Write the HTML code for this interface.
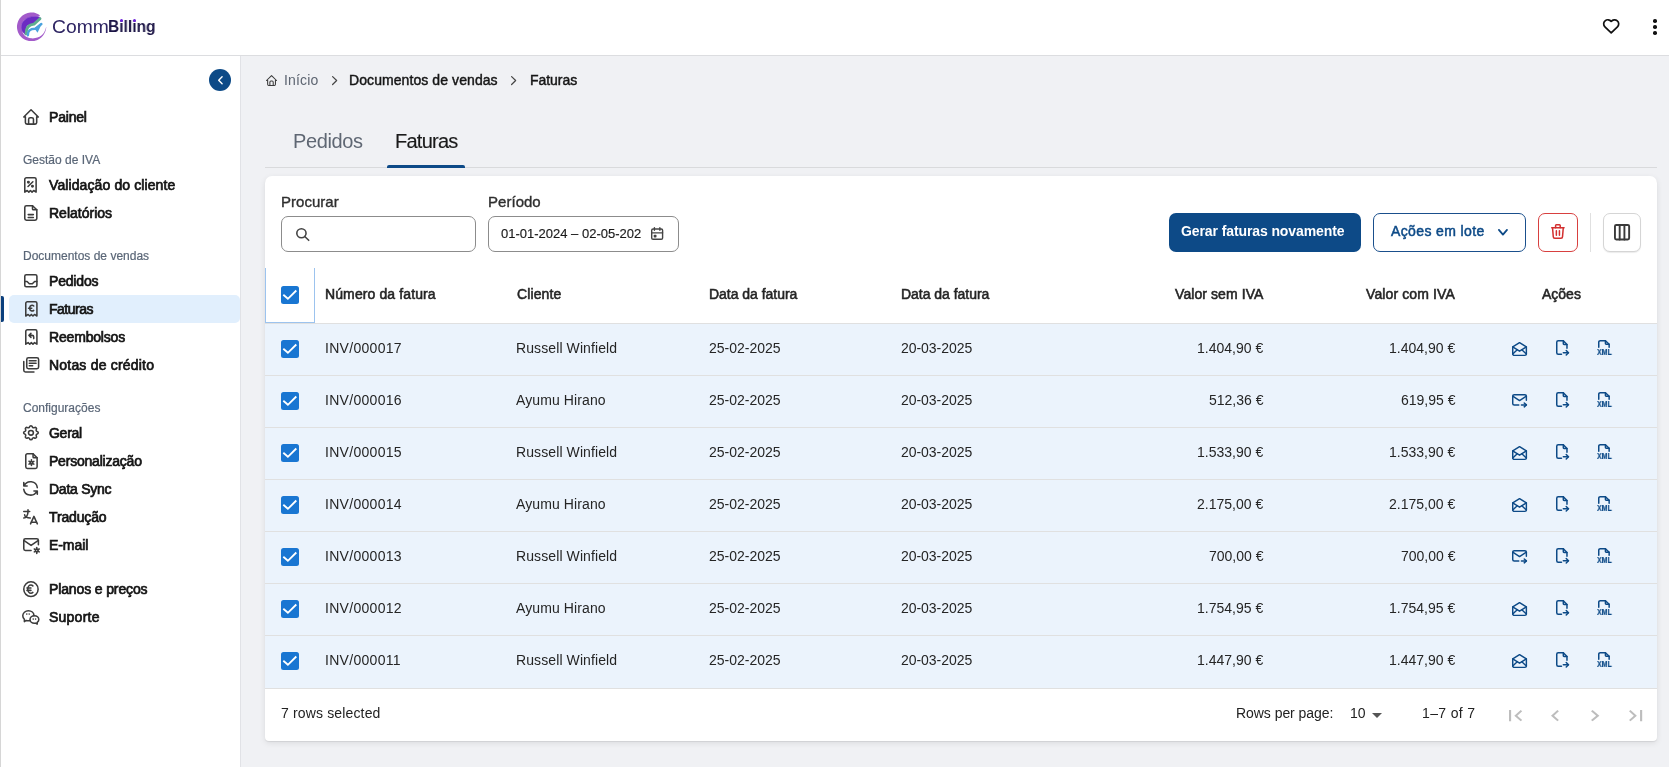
<!DOCTYPE html>
<html><head><meta charset="utf-8"><title>CommBilling - Faturas</title>
<style>
html,body{margin:0;padding:0;width:1669px;height:767px;overflow:hidden;background:#f0f1f4;}
body{position:relative;font-family:"Liberation Sans", sans-serif;-webkit-font-smoothing:antialiased;}
.t{position:absolute;white-space:nowrap;will-change:transform;}
.b{position:absolute;}
.ic{position:absolute;overflow:visible;}
</style></head><body>
<div class="b" style="left:0px;top:0px;width:1669px;height:55px;background:#fff;"></div>
<div class="b" style="left:0px;top:55px;width:1669px;height:1px;background:#dcdde0;"></div>
<div class="b" style="left:0px;top:56px;width:240px;height:711px;background:#fff;"></div>
<div class="b" style="left:240px;top:56px;width:1px;height:711px;background:#e1e2e6;"></div>
<div class="b" style="left:0px;top:0px;width:1px;height:767px;background:#d6d6d6;"></div>
<svg class="ic" style="left:12px;top:8px;width:40px;height:38px" viewBox="0 0 807 767">
<path d="M560,145 C551.7,132.3 497.5,108.8 470,100 C442.5,91.2 425.0,90.0 395,92 C365.0,94.0 324.2,99.0 290,112 C255.8,125.0 217.5,145.3 190,170 C162.5,194.7 140.0,225.0 125,260 C110.0,295.0 100.0,340.0 100,380 C100.0,420.0 110.0,465.0 125,500 C140.0,535.0 162.5,565.0 190,590 C217.5,615.0 255.8,637.0 290,650 C324.2,663.0 360.0,668.0 395,668 C430.0,668.0 467.5,662.2 500,650 C532.5,637.8 565.0,616.7 590,595 C615.0,573.3 634.5,545.8 650,520 C665.5,494.2 676.3,462.5 683,440 C689.7,417.5 692.5,383.3 690,385 C687.5,386.7 678.8,426.7 668,450 C657.2,473.3 643.8,503.3 625,525 C606.2,546.7 580.8,566.2 555,580 C529.2,593.8 497.5,602.7 470,608 C442.5,613.3 416.7,614.7 390,612 C363.3,609.3 333.3,602.7 310,592 C286.7,581.3 267.5,568.0 250,548 C232.5,528.0 215.3,500.0 205,472 C194.7,444.0 187.2,410.3 188,380 C188.8,349.7 196.7,315.3 210,290 C223.3,264.7 245.5,244.7 268,228 C290.5,211.3 317.7,198.7 345,190 C372.3,181.3 402.8,178.3 432,176 C461.2,173.7 498.7,181.2 520,176 C541.3,170.8 568.3,157.7 560,145Z" fill="#a35bca"/>
<path d="M548,186 C525.8,179.3 465.8,177.0 432,178 C398.2,179.0 372.3,183.0 345,192 C317.7,201.0 290.2,215.0 268,232 C245.8,249.0 224.7,269.3 212,294 C199.3,318.7 192.5,350.7 192,380 C191.5,409.3 196.0,444.2 209,470 C222.0,495.8 257.7,526.3 270,535 C282.3,543.7 280.8,541.2 283,522 C285.2,502.8 277.2,449.5 283,420 C288.8,390.5 291.0,361.3 318,345 C345.0,328.7 403.8,343.2 445,322 C486.2,300.8 547.8,240.7 565,218 C582.2,195.3 570.2,192.7 548,186Z" fill="#6c2bc3" stroke="#6c2bc3" stroke-width="14"/>
<path d="M283,522 C280,420 318,338 445,325 L565,218" stroke="#5fae8f" stroke-width="58" fill="none" stroke-linecap="round"/>
<path d="M320,548 C318,465 360,418 470,420 L592,322" stroke="#4aa3de" stroke-width="50" fill="none" stroke-linecap="round"/>
<path d="M450,410 L602,318 L515,498Z" fill="#4aa3de"/>
</svg>
<div class="t" style="left:52.4px;top:17.66px;font-size:18px;line-height:18px;color:#2e2563;transform:scaleX(1.072);transform-origin:0 0;">Comm</div>
<div class="t" style="left:108.4px;top:18.21px;font-size:17px;line-height:17px;font-weight:700;color:#1b1445;transform:scaleX(0.915);transform-origin:0 0;">Billing</div>
<div class="b" style="left:119.7px;top:19.3px;width:3px;height:3px;background:#6a1fd8;border-radius:50%;"></div>
<div class="b" style="left:132.7px;top:19.3px;width:3px;height:3px;background:#6a1fd8;border-radius:50%;"></div>
<svg class="ic" style="left:1602.60px;top:19.20px;width:16.40px;height:14.80px;" viewBox="0 0 16.40 14.80"><g transform="translate(-1.823 -2.528) scale(0.8352 0.8239)" fill="none" stroke="#111" stroke-width="1.7" stroke-linecap="round" stroke-linejoin="round" vector-effect="non-scaling-stroke"><path vector-effect="non-scaling-stroke" d="M19.5 12.572l-7.5 7.428l-7.5 -7.428a5 5 0 1 1 7.5 -6.566a5 5 0 1 1 7.5 6.572"/></g></svg>
<div class="b" style="left:1653.2px;top:19.4px;width:3.6px;height:3.6px;background:#111;border-radius:50%;"></div>
<div class="b" style="left:1653.2px;top:25.3px;width:3.6px;height:3.6px;background:#111;border-radius:50%;"></div>
<div class="b" style="left:1653.2px;top:31.2px;width:3.6px;height:3.6px;background:#111;border-radius:50%;"></div>
<div class="b" style="left:209px;top:69px;width:22px;height:22px;background:#0d4a87;border-radius:50%;"></div>
<svg class="ic" style="left:217.80px;top:76.20px;width:4.80px;height:8.40px;" viewBox="0 0 4.80 8.40"><g transform="translate(-4.400 -2.800) scale(0.5667 0.5833)" fill="none" stroke="#fff" stroke-width="1.4" stroke-linecap="round" stroke-linejoin="round" vector-effect="non-scaling-stroke"><path vector-effect="non-scaling-stroke" d="M15 6l-6 6l6 6"/></g></svg>
<div class="b" style="left:9px;top:295px;width:230.5px;height:28px;background:#e1effd;border-radius:5px;"></div>
<div class="b" style="left:1px;top:296px;width:3px;height:26px;background:#0b3f7c;border-radius:0 2px 2px 0;"></div>
<div class="t" style="top:153.84px;font-size:12px;line-height:12px;font-weight:400;color:#5a6677;left:23.00px;letter-spacing:0.0px;-webkit-text-stroke:0.2px #5a6677;">Gestão de IVA</div>
<div class="t" style="top:249.84px;font-size:12px;line-height:12px;font-weight:400;color:#5a6677;left:23.00px;letter-spacing:0.0px;-webkit-text-stroke:0.2px #5a6677;">Documentos de vendas</div>
<div class="t" style="top:401.84px;font-size:12px;line-height:12px;font-weight:400;color:#5a6677;left:23.00px;letter-spacing:0.0px;-webkit-text-stroke:0.2px #5a6677;">Configurações</div>
<div class="t" style="top:110.15px;font-size:14px;line-height:14px;font-weight:400;color:#141414;left:48.80px;letter-spacing:-0.2px;-webkit-text-stroke:0.7px #141414;">Painel</div>
<svg class="ic" style="left:23.00px;top:108.90px;width:16.10px;height:15.90px;" viewBox="0 0 16.10 15.90"><g transform="translate(-1.650 -1.617) scale(0.8083 0.7972)" fill="none" stroke="#3c3c3c" stroke-width="1.55" stroke-linecap="round" stroke-linejoin="round" vector-effect="non-scaling-stroke"><path vector-effect="non-scaling-stroke" d="M5 12l-2 0l9 -9l9 9l-2 0"/><path vector-effect="non-scaling-stroke" d="M5 12v7a2 2 0 0 0 2 2h10a2 2 0 0 0 2 -2v-7"/><path vector-effect="non-scaling-stroke" d="M9 21v-6a2 2 0 0 1 2 -2h2a2 2 0 0 1 2 2v6"/></g></svg>
<div class="t" style="top:178.15px;font-size:14px;line-height:14px;font-weight:400;color:#141414;left:48.80px;letter-spacing:0.105px;-webkit-text-stroke:0.7px #141414;">Validação do cliente</div>
<svg class="ic" style="left:24.40px;top:176.80px;width:12.90px;height:15.90px;" viewBox="0 0 12.90 15.90"><g transform="translate(-3.279 -1.617) scale(0.8107 0.7972)" fill="none" stroke="#3c3c3c" stroke-width="1.55" stroke-linecap="round" stroke-linejoin="round" vector-effect="non-scaling-stroke"><path vector-effect="non-scaling-stroke" d="M9 14l6 -6"/><circle vector-effect="non-scaling-stroke" cx="9.5" cy="8.5" r=".9" fill="currentColor"/><circle vector-effect="non-scaling-stroke" cx="14.5" cy="13.5" r=".9" fill="currentColor"/><path vector-effect="non-scaling-stroke" d="M5 21v-16a2 2 0 0 1 2 -2h10a2 2 0 0 1 2 2v16l-3 -2l-2 2l-2 -2l-2 2l-2 -2l-3 2"/></g></svg>
<div class="t" style="top:206.15px;font-size:14px;line-height:14px;font-weight:400;color:#141414;left:48.80px;letter-spacing:0.0px;-webkit-text-stroke:0.7px #141414;">Relatórios</div>
<svg class="ic" style="left:24.40px;top:204.90px;width:13.60px;height:16.00px;" viewBox="0 0 13.60 16.00"><g transform="translate(-3.529 -1.633) scale(0.8607 0.8028)" fill="none" stroke="#3c3c3c" stroke-width="1.55" stroke-linecap="round" stroke-linejoin="round" vector-effect="non-scaling-stroke"><path vector-effect="non-scaling-stroke" d="M14 3v4a1 1 0 0 0 1 1h4"/><path vector-effect="non-scaling-stroke" d="M17 21h-10a2 2 0 0 1 -2 -2v-14a2 2 0 0 1 2 -2h7l5 5v11a2 2 0 0 1 -2 2z"/><path vector-effect="non-scaling-stroke" d="M9 14l6 0"/><path vector-effect="non-scaling-stroke" d="M9 17.5l6 0"/></g></svg>
<div class="t" style="top:274.15px;font-size:14px;line-height:14px;font-weight:400;color:#141414;left:48.80px;letter-spacing:-0.183px;-webkit-text-stroke:0.7px #141414;">Pedidos</div>
<svg class="ic" style="left:24.10px;top:274.10px;width:13.70px;height:13.60px;" viewBox="0 0 13.70 13.60"><g transform="translate(-2.262 -2.237) scale(0.7594 0.7531)" fill="none" stroke="#3c3c3c" stroke-width="1.55" stroke-linecap="round" stroke-linejoin="round" vector-effect="non-scaling-stroke"><path vector-effect="non-scaling-stroke" d="M4 6a2 2 0 0 1 2 -2h12a2 2 0 0 1 2 2v12a2 2 0 0 1 -2 2h-12a2 2 0 0 1 -2 -2z"/><path vector-effect="non-scaling-stroke" d="M4 13h3l3 3h4l3 -3h3"/></g></svg>
<div class="t" style="top:302.15px;font-size:14px;line-height:14px;font-weight:400;color:#141414;left:48.80px;letter-spacing:-0.483px;-webkit-text-stroke:0.7px #141414;">Faturas</div>
<svg class="ic" style="left:24.70px;top:301.00px;width:12.70px;height:15.80px;" viewBox="0 0 12.70 15.80"><g transform="translate(-3.207 -1.600) scale(0.7964 0.7917)" fill="none" stroke="#3c3c3c" stroke-width="1.55" stroke-linecap="round" stroke-linejoin="round" vector-effect="non-scaling-stroke"><path vector-effect="non-scaling-stroke" d="M5 21v-16a2 2 0 0 1 2 -2h10a2 2 0 0 1 2 2v16l-3 -2l-2 2l-2 -2l-2 2l-2 -2l-3 2"/><path vector-effect="non-scaling-stroke" d="M15 8.3a3 3 0 0 0 -5 2.2v1.2a3 3 0 0 0 5 2.2"/><path vector-effect="non-scaling-stroke" d="M8.5 11.1h4"/></g></svg>
<div class="t" style="top:330.15px;font-size:14px;line-height:14px;font-weight:400;color:#141414;left:48.80px;letter-spacing:-0.178px;-webkit-text-stroke:0.7px #141414;">Reembolsos</div>
<svg class="ic" style="left:24.60px;top:328.90px;width:12.70px;height:16.00px;" viewBox="0 0 12.70 16.00"><g transform="translate(-3.207 -1.633) scale(0.7964 0.8028)" fill="none" stroke="#3c3c3c" stroke-width="1.55" stroke-linecap="round" stroke-linejoin="round" vector-effect="non-scaling-stroke"><path vector-effect="non-scaling-stroke" d="M5 21v-16a2 2 0 0 1 2 -2h10a2 2 0 0 1 2 2v16l-3 -2l-2 2l-2 -2l-2 2l-2 -2l-3 2"/><path vector-effect="non-scaling-stroke" d="M15 14v-2a2 2 0 0 0 -2 -2h-4l2.5 -2.5m-2.5 2.5l2.5 2.5"/></g></svg>
<div class="t" style="top:358.15px;font-size:14px;line-height:14px;font-weight:400;color:#141414;left:48.80px;letter-spacing:0.2px;-webkit-text-stroke:0.7px #141414;">Notas de crédito</div>
<svg class="ic" style="left:22.90px;top:357.20px;width:16.40px;height:15.70px;" viewBox="0 0 16.40 15.70"><g transform="translate(-2.195 -1.651) scale(0.8486 0.8086)" fill="none" stroke="#3c3c3c" stroke-width="1.55" stroke-linecap="round" stroke-linejoin="round" vector-effect="non-scaling-stroke"><path vector-effect="non-scaling-stroke" d="M9 3h10a2 2 0 0 1 2 2v9.5a2 2 0 0 1 -2 2h-10a2 2 0 0 1 -2 -2v-9.5a2 2 0 0 1 2 -2z"/><path vector-effect="non-scaling-stroke" d="M3.5 7.5v11a2 2 0 0 0 2 2h10"/><path vector-effect="non-scaling-stroke" d="M10 6.7h8"/><path vector-effect="non-scaling-stroke" d="M10 9.9h8"/><path vector-effect="non-scaling-stroke" d="M10 12.8h4"/></g></svg>
<div class="t" style="top:426.15px;font-size:14px;line-height:14px;font-weight:400;color:#141414;left:48.80px;letter-spacing:-0.275px;-webkit-text-stroke:0.7px #141414;">Geral</div>
<svg class="ic" style="left:23.10px;top:425.00px;width:15.90px;height:15.60px;" viewBox="0 0 15.90 15.60"><g transform="translate(-1.834 -1.567) scale(0.8153 0.7806)" fill="none" stroke="#3c3c3c" stroke-width="1.55" stroke-linecap="round" stroke-linejoin="round" vector-effect="non-scaling-stroke"><path vector-effect="non-scaling-stroke" d="M10.325 4.317c.426 -1.756 2.924 -1.756 3.35 0a1.724 1.724 0 0 0 2.573 1.066c1.543 -.94 3.31 .826 2.37 2.37a1.724 1.724 0 0 0 1.065 2.572c1.756 .426 1.756 2.924 0 3.35a1.724 1.724 0 0 0 -1.066 2.573c.94 1.543 -.826 3.31 -2.37 2.37a1.724 1.724 0 0 0 -2.572 1.065c-.426 1.756 -2.924 1.756 -3.35 0a1.724 1.724 0 0 0 -2.573 -1.066c-1.543 .94 -3.31 -.826 -2.37 -2.37a1.724 1.724 0 0 0 -1.065 -2.572c-1.756 -.426 -1.756 -2.924 0 -3.35a1.724 1.724 0 0 0 1.066 -2.573c-.94 -1.543 .826 -3.31 2.37 -2.37c1 .608 2.296 .07 2.572 -1.065z"/><circle vector-effect="non-scaling-stroke" cx="12" cy="12" r="3"/></g></svg>
<div class="t" style="top:454.15px;font-size:14px;line-height:14px;font-weight:400;color:#141414;left:48.80px;letter-spacing:-0.215px;-webkit-text-stroke:0.7px #141414;">Personalização</div>
<svg class="ic" style="left:24.75px;top:452.90px;width:12.90px;height:16.20px;" viewBox="0 0 12.90 16.20"><g transform="translate(-3.279 -1.667) scale(0.8107 0.8139)" fill="none" stroke="#3c3c3c" stroke-width="1.55" stroke-linecap="round" stroke-linejoin="round" vector-effect="non-scaling-stroke"><path vector-effect="non-scaling-stroke" d="M14 3v4a1 1 0 0 0 1 1h4"/><path vector-effect="non-scaling-stroke" d="M17 21h-10a2 2 0 0 1 -2 -2v-14a2 2 0 0 1 2 -2h7l5 5v11a2 2 0 0 1 -2 2z"/><circle vector-effect="non-scaling-stroke" cx="12" cy="14" r="1.5"/><path vector-effect="non-scaling-stroke" d="M12 10.5v1.5"/><path vector-effect="non-scaling-stroke" d="M12 16v1.5"/><path vector-effect="non-scaling-stroke" d="M15.031 12.25l-1.299 .75"/><path vector-effect="non-scaling-stroke" d="M10.268 15l-1.3 .75"/><path vector-effect="non-scaling-stroke" d="M15 15.803l-1.285 -.773"/><path vector-effect="non-scaling-stroke" d="M10.285 12.97l-1.285 -.773"/></g></svg>
<div class="t" style="top:482.15px;font-size:14px;line-height:14px;font-weight:400;color:#141414;left:48.80px;letter-spacing:-0.25px;-webkit-text-stroke:0.7px #141414;">Data Sync</div>
<svg class="ic" style="left:23.40px;top:481.40px;width:15.10px;height:14.90px;" viewBox="0 0 15.10 14.90"><g transform="translate(-2.613 -2.563) scale(0.8469 0.8344)" fill="none" stroke="#3c3c3c" stroke-width="1.55" stroke-linecap="round" stroke-linejoin="round" vector-effect="non-scaling-stroke"><path vector-effect="non-scaling-stroke" d="M20 11a8.1 8.1 0 0 0 -15.5 -2m-.5 -4v4h4"/><path vector-effect="non-scaling-stroke" d="M4 13a8.1 8.1 0 0 0 15.5 2m.5 4v-4h-4"/></g></svg>
<div class="t" style="top:510.15px;font-size:14px;line-height:14px;font-weight:400;color:#141414;left:48.80px;letter-spacing:-0.143px;-webkit-text-stroke:0.7px #141414;">Tradução</div>
<svg class="ic" style="left:23.40px;top:508.90px;width:15.10px;height:15.60px;" viewBox="0 0 15.10 15.60"><g transform="translate(-2.613 -1.704) scale(0.8469 0.8265)" fill="none" stroke="#3c3c3c" stroke-width="1.55" stroke-linecap="round" stroke-linejoin="round" vector-effect="non-scaling-stroke"><path vector-effect="non-scaling-stroke" d="M4 5h7"/><path vector-effect="non-scaling-stroke" d="M9 3v2c0 4.418 -2.239 8 -5 8"/><path vector-effect="non-scaling-stroke" d="M5 9c0 2.144 2.952 3.908 6.7 4"/><path vector-effect="non-scaling-stroke" d="M12 20l4 -9l4 9"/><path vector-effect="non-scaling-stroke" d="M19.1 18h-6.2"/></g></svg>
<div class="t" style="top:538.15px;font-size:14px;line-height:14px;font-weight:400;color:#141414;left:48.80px;letter-spacing:-0.08px;-webkit-text-stroke:0.7px #141414;">E-mail</div>
<svg class="ic" style="left:23.00px;top:538.30px;width:17.00px;height:16.20px;" viewBox="0 0 17.00 16.20"><g transform="translate(-1.661 -3.411) scale(0.8119 0.8371)" fill="none" stroke="#3c3c3c" stroke-width="1.55" stroke-linecap="round" stroke-linejoin="round" vector-effect="non-scaling-stroke"><path vector-effect="non-scaling-stroke" d="M12 19h-7a2 2 0 0 1 -2 -2v-10a2 2 0 0 1 2 -2h14a2 2 0 0 1 2 2v5"/><path vector-effect="non-scaling-stroke" d="M3 7l9 6l9 -6"/><circle vector-effect="non-scaling-stroke" cx="19" cy="19" r="1.6"/><path vector-effect="non-scaling-stroke" d="M19 15.5v1.5"/><path vector-effect="non-scaling-stroke" d="M19 21v1.5"/><path vector-effect="non-scaling-stroke" d="M22.03 17.25l-1.3 .75"/><path vector-effect="non-scaling-stroke" d="M17.27 20l-1.3 .75"/><path vector-effect="non-scaling-stroke" d="M15.97 17.25l1.3 .75"/><path vector-effect="non-scaling-stroke" d="M20.73 20l1.3 .75"/></g></svg>
<div class="t" style="top:582.15px;font-size:14px;line-height:14px;font-weight:400;color:#141414;left:48.80px;letter-spacing:-0.129px;-webkit-text-stroke:0.7px #141414;">Planos e preços</div>
<svg class="ic" style="left:23.00px;top:580.70px;width:15.90px;height:16.30px;" viewBox="0 0 15.90 16.30"><g transform="translate(-1.617 -1.683) scale(0.7972 0.8194)" fill="none" stroke="#3c3c3c" stroke-width="1.55" stroke-linecap="round" stroke-linejoin="round" vector-effect="non-scaling-stroke"><circle vector-effect="non-scaling-stroke" cx="12" cy="12" r="9"/><path vector-effect="non-scaling-stroke" d="M14.401 8c-.669 -.628 -1.5 -1 -2.401 -1c-2.21 0 -4 2.239 -4 5s1.79 5 4 5c.9 0 1.731 -.372 2.4 -1"/><path vector-effect="non-scaling-stroke" d="M7 10.5h5"/><path vector-effect="non-scaling-stroke" d="M7 13.5h5"/></g></svg>
<div class="t" style="top:610.15px;font-size:14px;line-height:14px;font-weight:400;color:#141414;left:48.80px;letter-spacing:0.233px;-webkit-text-stroke:0.7px #141414;">Suporte</div>
<svg class="ic" style="left:22.40px;top:609.60px;width:17.60px;height:14.90px;" viewBox="0 0 17.60 14.90"><g transform="translate(-0.830 -2.562) scale(0.8025 0.8344)" fill="none" stroke="#3c3c3c" stroke-width="1.55" stroke-linecap="round" stroke-linejoin="round" vector-effect="non-scaling-stroke"><path vector-effect="non-scaling-stroke" d="M16.5 10c3.038 0 5.5 2.015 5.5 4.5c0 1.397 -.778 2.645 -2 3.47l0 2.03l-1.964 -1.178a6.649 6.649 0 0 1 -1.536 .178c-3.038 0 -5.5 -2.015 -5.5 -4.5s2.462 -4.5 5.5 -4.5z"/><path vector-effect="non-scaling-stroke" d="M11.197 15.698c-.69 .196 -1.43 .302 -2.197 .302a8.008 8.008 0 0 1 -2.612 -.432l-2.388 1.432v-2.801c-1.237 -1.082 -2 -2.564 -2 -4.199c0 -3.314 3.134 -6 7 -6c3.782 0 6.863 2.57 7 5.785l0 .233"/><path vector-effect="non-scaling-stroke" d="M10 8h.01"/><path vector-effect="non-scaling-stroke" d="M7 8h.01"/><path vector-effect="non-scaling-stroke" d="M15 14h.01"/><path vector-effect="non-scaling-stroke" d="M18 14h.01"/></g></svg>
<svg class="ic" style="left:265.80px;top:74.80px;width:11.10px;height:11.00px;" viewBox="0 0 11.10 11.00"><g transform="translate(-1.150 -1.133) scale(0.5583 0.5528)" fill="none" stroke="#3a3a3a" stroke-width="1.05" stroke-linecap="round" stroke-linejoin="round" vector-effect="non-scaling-stroke"><path vector-effect="non-scaling-stroke" d="M5 12l-2 0l9 -9l9 9l-2 0"/><path vector-effect="non-scaling-stroke" d="M5 12v7a2 2 0 0 0 2 2h10a2 2 0 0 0 2 -2v-7"/><path vector-effect="non-scaling-stroke" d="M9 21v-6a2 2 0 0 1 2 -2h2a2 2 0 0 1 2 2v6"/></g></svg>
<div class="t" style="top:72.75px;font-size:14px;line-height:14px;font-weight:400;color:#5d6571;left:284.00px;letter-spacing:0.15px;">Início</div>
<svg class="ic" style="left:331.75px;top:76.00px;width:5.25px;height:9.10px;" viewBox="0 0 5.25 9.10"><g transform="translate(-5.475 -3.350) scale(0.6750 0.6583)" fill="none" stroke="#444" stroke-width="1.2" stroke-linecap="round" stroke-linejoin="round" vector-effect="non-scaling-stroke"><path vector-effect="non-scaling-stroke" d="M9 6l6 6l-6 6"/></g></svg>
<div class="t" style="top:72.75px;font-size:14px;line-height:14px;font-weight:400;color:#161616;left:349.30px;letter-spacing:0.08px;-webkit-text-stroke:0.45px #161616;">Documentos de vendas</div>
<svg class="ic" style="left:510.50px;top:76.00px;width:5.25px;height:9.10px;" viewBox="0 0 5.25 9.10"><g transform="translate(-5.475 -3.350) scale(0.6750 0.6583)" fill="none" stroke="#444" stroke-width="1.2" stroke-linecap="round" stroke-linejoin="round" vector-effect="non-scaling-stroke"><path vector-effect="non-scaling-stroke" d="M9 6l6 6l-6 6"/></g></svg>
<div class="t" style="top:72.75px;font-size:14px;line-height:14px;font-weight:400;color:#161616;left:529.60px;letter-spacing:-0.05px;-webkit-text-stroke:0.45px #161616;">Faturas</div>
<div class="t" style="top:131.07px;font-size:20px;line-height:20px;font-weight:400;color:#5f6773;left:293.00px;letter-spacing:-0.4px;">Pedidos</div>
<div class="t" style="top:131.07px;font-size:20px;line-height:20px;font-weight:400;color:#1a1a1a;left:395.00px;letter-spacing:-0.75px;-webkit-text-stroke:0.15px #1a1a1a;">Faturas</div>
<div class="b" style="left:265px;top:167px;width:1392px;height:1px;background:#d9dadc;"></div>
<div class="b" style="left:387px;top:165px;width:78px;height:3px;background:#0d4a87;border-radius:2px 2px 0 0;"></div>
<div class="b" style="left:265px;top:176px;width:1392px;height:565px;background:#fff;border-radius:7px 7px 4px 4px;box-shadow:0px 1px 1px 0px rgba(0,0,0,0.07),0px 2px 6px 0px rgba(0,0,0,0.09);"></div>
<div class="t" style="top:193.90px;font-size:15px;line-height:15px;font-weight:400;color:#2e2e2e;left:281.00px;letter-spacing:0.03px;-webkit-text-stroke:0.35px #2e2e2e;">Procurar</div>
<div class="t" style="top:193.90px;font-size:15px;line-height:15px;font-weight:400;color:#2e2e2e;left:488.00px;letter-spacing:0.03px;-webkit-text-stroke:0.35px #2e2e2e;">Período</div>
<div class="b" style="left:281px;top:216px;width:195px;height:36px;box-sizing:border-box;border:1px solid #8c8c8c;border-radius:7px;background:#fff;"></div>
<svg class="ic" style="left:296.00px;top:227.60px;width:13.50px;height:13.10px;" viewBox="0 0 13.50 13.10"><g transform="translate(-1.183 -1.117) scale(0.6611 0.6389)" fill="none" stroke="#444" stroke-width="1.6" stroke-linecap="round" stroke-linejoin="round" vector-effect="non-scaling-stroke"><circle vector-effect="non-scaling-stroke" cx="10" cy="10" r="7"/><path vector-effect="non-scaling-stroke" d="M21 21l-6 -6"/></g></svg>
<div class="b" style="left:488px;top:216px;width:191px;height:36px;box-sizing:border-box;border:1px solid #8c8c8c;border-radius:7px;background:#fff;"></div>
<div class="t" style="top:227.20px;font-size:13px;line-height:13px;font-weight:400;color:#1a1a1a;left:501.00px;letter-spacing:0px;-webkit-text-stroke:0.15px #1a1a1a;">01-01-2024 – 02-05-202</div>
<svg class="ic" style="left:650.70px;top:227.00px;width:12.30px;height:13.00px;" viewBox="0 0 12.30 13.00"><g transform="translate(-2.025 -1.233) scale(0.6812 0.6444)" fill="none" stroke="#444" stroke-width="1.4" stroke-linecap="round" stroke-linejoin="round" vector-effect="non-scaling-stroke"><path vector-effect="non-scaling-stroke" d="M4 7a2 2 0 0 1 2 -2h12a2 2 0 0 1 2 2v12a2 2 0 0 1 -2 2h-12a2 2 0 0 1 -2 -2z"/><path vector-effect="non-scaling-stroke" d="M16 3v4"/><path vector-effect="non-scaling-stroke" d="M8 3v4"/><path vector-effect="non-scaling-stroke" d="M4 11h16"/><path vector-effect="non-scaling-stroke" d="M8 15h2v2h-2z"/></g></svg>
<div class="b" style="left:1169px;top:213px;width:192px;height:39px;background:#0d4a87;border-radius:7px;"></div>
<div class="t" style="top:223.75px;font-size:14px;line-height:14px;font-weight:700;color:#fff;left:1181.30px;letter-spacing:-0.1px;">Gerar faturas novamente</div>
<div class="b" style="left:1373px;top:213px;width:153px;height:39px;box-sizing:border-box;border:1.3px solid #1a4f8c;border-radius:7px;background:#fff;"></div>
<div class="t" style="top:224.45px;font-size:14px;line-height:14px;font-weight:400;color:#0d4a87;left:1390.60px;letter-spacing:0.38px;-webkit-text-stroke:0.5px #0d4a87;">Ações em lote</div>
<svg class="ic" style="left:1497.90px;top:228.90px;width:9.90px;height:6.50px;" viewBox="0 0 9.90 6.50"><g transform="translate(-3.150 -6.150) scale(0.6750 0.7833)" fill="none" stroke="#0d4a87" stroke-width="1.8" stroke-linecap="round" stroke-linejoin="round" vector-effect="non-scaling-stroke"><path vector-effect="non-scaling-stroke" d="M6 9l6 6l6 -6"/></g></svg>
<div class="b" style="left:1538px;top:213px;width:40px;height:39px;box-sizing:border-box;border:1.3px solid #d8403f;border-radius:7px;background:#fff;"></div>
<svg class="ic" style="left:1550.90px;top:224.40px;width:13.80px;height:15.10px;" viewBox="0 0 13.80 15.10"><g transform="translate(-2.325 -1.517) scale(0.7687 0.7556)" fill="none" stroke="#d32f2f" stroke-width="1.5" stroke-linecap="round" stroke-linejoin="round" vector-effect="non-scaling-stroke"><path vector-effect="non-scaling-stroke" d="M4 7l16 0"/><path vector-effect="non-scaling-stroke" d="M10 11l0 6"/><path vector-effect="non-scaling-stroke" d="M14 11l0 6"/><path vector-effect="non-scaling-stroke" d="M5 7l1 12a2 2 0 0 0 2 2h8a2 2 0 0 0 2 -2l1 -12"/><path vector-effect="non-scaling-stroke" d="M9 7v-3a1 1 0 0 1 1 -1h4a1 1 0 0 1 1 1v3"/></g></svg>
<div class="b" style="left:1590px;top:213px;width:1px;height:39px;background:#e0e0e0;"></div>
<div class="b" style="left:1603px;top:213px;width:38px;height:39px;box-sizing:border-box;border:1px solid #d5d5d5;border-radius:7px;background:#fff;box-shadow:0 1px 1px rgba(0,0,0,0.08);"></div>
<svg class="ic" style="left:1613.90px;top:223.60px;width:16.10px;height:16.40px;" viewBox="0 0 16.10 16.40"><g transform="translate(-2.600 -2.675) scale(0.8875 0.9063)" fill="none" stroke="#3a3a3a" stroke-width="1.9" stroke-linecap="round" stroke-linejoin="round" vector-effect="non-scaling-stroke"><rect vector-effect="non-scaling-stroke" x="4" y="4" width="16" height="16" rx="1.5"/><path vector-effect="non-scaling-stroke" d="M9.33 4v16M14.67 4v16"/></g></svg>
<div class="b" style="left:265px;top:268px;width:50px;height:55px;box-sizing:border-box;border:1px solid #9cc3ee;border-top:none;"></div>
<div class="b" style="left:281px;top:286px;width:18px;height:18px;background:#1976d2;border-radius:2.5px;"></div>
<svg class="ic" style="left:281px;top:286px;width:18px;height:18px" viewBox="0 0 18 18"><path d="M2.3 8.8L6.9 12.8L15.3 4.5" fill="none" stroke="#fff" stroke-width="1.85"/></svg>
<div class="t" style="top:287.05px;font-size:14px;line-height:14px;font-weight:400;color:#252525;left:325.00px;letter-spacing:0.11px;-webkit-text-stroke:0.55px #252525;">Número da fatura</div>
<div class="t" style="top:287.05px;font-size:14px;line-height:14px;font-weight:400;color:#252525;left:517.00px;letter-spacing:0.1px;-webkit-text-stroke:0.55px #252525;">Cliente</div>
<div class="t" style="top:287.05px;font-size:14px;line-height:14px;font-weight:400;color:#252525;left:709.00px;letter-spacing:-0.03px;-webkit-text-stroke:0.55px #252525;">Data da fatura</div>
<div class="t" style="top:287.05px;font-size:14px;line-height:14px;font-weight:400;color:#252525;left:900.60px;letter-spacing:-0.03px;-webkit-text-stroke:0.55px #252525;">Data da fatura</div>
<div class="t" style="top:287.05px;font-size:14px;line-height:14px;font-weight:400;color:#252525;right:406.00px;text-align:right;letter-spacing:0.08px;-webkit-text-stroke:0.55px #252525;">Valor sem IVA</div>
<div class="t" style="top:287.05px;font-size:14px;line-height:14px;font-weight:400;color:#252525;right:214.00px;text-align:right;letter-spacing:0.12px;-webkit-text-stroke:0.55px #252525;">Valor com IVA</div>
<div class="t" style="top:287.05px;font-size:14px;line-height:14px;font-weight:400;color:#252525;left:1541.50px;letter-spacing:0.0px;-webkit-text-stroke:0.55px #252525;">Ações</div>
<div class="b" style="left:265px;top:323px;width:1392px;height:1px;background:#e0e0e0;"></div>
<div class="b" style="left:265px;top:324px;width:1392px;height:51px;background:#ebf3fc;"></div>
<div class="b" style="left:265px;top:375px;width:1392px;height:1px;background:#e0e0e0;"></div>
<div class="b" style="left:281px;top:340px;width:18px;height:18px;background:#1976d2;border-radius:2.5px;"></div>
<svg class="ic" style="left:281px;top:340px;width:18px;height:18px" viewBox="0 0 18 18"><path d="M2.3 8.8L6.9 12.8L15.3 4.5" fill="none" stroke="#fff" stroke-width="1.85"/></svg>
<div class="t" style="top:340.95px;font-size:14px;line-height:14px;font-weight:400;color:#252525;left:324.50px;letter-spacing:0.3px;">INV/000017</div>
<div class="t" style="top:340.95px;font-size:14px;line-height:14px;font-weight:400;color:#252525;left:516.20px;letter-spacing:0.1px;">Russell Winfield</div>
<div class="t" style="top:340.95px;font-size:14px;line-height:14px;font-weight:400;color:#252525;left:709.00px;">25-02-2025</div>
<div class="t" style="top:340.95px;font-size:14px;line-height:14px;font-weight:400;color:#252525;left:900.50px;letter-spacing:-0.05px;">20-03-2025</div>
<div class="t" style="top:340.95px;font-size:14px;line-height:14px;font-weight:400;color:#252525;right:406.00px;text-align:right;">1.404,90 €</div>
<div class="t" style="top:340.95px;font-size:14px;line-height:14px;font-weight:400;color:#252525;right:214.00px;text-align:right;">1.404,90 €</div>
<svg class="ic" style="left:1511.70px;top:341.80px;width:15.10px;height:14.10px;" viewBox="0 0 15.10 14.10"><g transform="translate(-1.550 -1.383) scale(0.7583 0.7028)" fill="none" stroke="#0d4a87" stroke-width="1.45" stroke-linecap="round" stroke-linejoin="round" vector-effect="non-scaling-stroke"><path vector-effect="non-scaling-stroke" d="M3 9l9 -6l9 6v10a2 2 0 0 1 -2 2h-14a2 2 0 0 1 -2 -2z"/><path vector-effect="non-scaling-stroke" d="M3 9l9 6l9 -6"/><path vector-effect="non-scaling-stroke" d="M3 19l6 -6"/><path vector-effect="non-scaling-stroke" d="M15 13l6 6"/></g></svg>
<svg class="ic" style="left:1555.90px;top:340.00px;width:13.20px;height:15.70px;" viewBox="0 0 13.20 15.70"><g transform="translate(-2.906 -1.492) scale(0.7312 0.7474)" fill="none" stroke="#0d4a87" stroke-width="1.5" stroke-linecap="round" stroke-linejoin="round" vector-effect="non-scaling-stroke"><path vector-effect="non-scaling-stroke" d="M14 3v4a1 1 0 0 0 1 1h4"/><path vector-effect="non-scaling-stroke" d="M11.5 21h-4.5a2 2 0 0 1 -2 -2v-14a2 2 0 0 1 2 -2h7l5 5v5"/><path vector-effect="non-scaling-stroke" d="M14 19h7"/><path vector-effect="non-scaling-stroke" d="M18 16l3 3l-3 3"/></g></svg>
<svg class="ic" style="left:1597.90px;top:340.10px;width:11.90px;height:7.90px;" viewBox="0 0 11.90 7.90"><g transform="translate(-2.964 -1.383) scale(0.7429 0.7111)" fill="none" stroke="#0d4a87" stroke-width="1.5" stroke-linecap="round" stroke-linejoin="round" vector-effect="non-scaling-stroke"><path vector-effect="non-scaling-stroke" d="M14 3v4a1 1 0 0 0 1 1h4"/><path vector-effect="non-scaling-stroke" d="M5 12v-7a2 2 0 0 1 2 -2h7l5 5v4"/></g></svg>
<div class="t" style="left:1597.2px;top:347.90px;font-size:8.4px;line-height:8.4px;font-weight:700;color:#0d4a87;transform:scaleX(0.84);transform-origin:0 0;-webkit-text-stroke:0.2px #0d4a87">XML</div>
<div class="b" style="left:265px;top:376px;width:1392px;height:51px;background:#ebf3fc;"></div>
<div class="b" style="left:265px;top:427px;width:1392px;height:1px;background:#e0e0e0;"></div>
<div class="b" style="left:281px;top:392px;width:18px;height:18px;background:#1976d2;border-radius:2.5px;"></div>
<svg class="ic" style="left:281px;top:392px;width:18px;height:18px" viewBox="0 0 18 18"><path d="M2.3 8.8L6.9 12.8L15.3 4.5" fill="none" stroke="#fff" stroke-width="1.85"/></svg>
<div class="t" style="top:392.95px;font-size:14px;line-height:14px;font-weight:400;color:#252525;left:324.50px;letter-spacing:0.3px;">INV/000016</div>
<div class="t" style="top:392.95px;font-size:14px;line-height:14px;font-weight:400;color:#252525;left:516.20px;letter-spacing:0.1px;">Ayumu Hirano</div>
<div class="t" style="top:392.95px;font-size:14px;line-height:14px;font-weight:400;color:#252525;left:709.00px;">25-02-2025</div>
<div class="t" style="top:392.95px;font-size:14px;line-height:14px;font-weight:400;color:#252525;left:900.50px;letter-spacing:-0.05px;">20-03-2025</div>
<div class="t" style="top:392.95px;font-size:14px;line-height:14px;font-weight:400;color:#252525;right:406.00px;text-align:right;">512,36 €</div>
<div class="t" style="top:392.95px;font-size:14px;line-height:14px;font-weight:400;color:#252525;right:214.00px;text-align:right;">619,95 €</div>
<svg class="ic" style="left:1511.70px;top:394.10px;width:15.10px;height:13.60px;" viewBox="0 0 15.10 13.60"><g transform="translate(-1.550 -2.913) scale(0.7583 0.7275)" fill="none" stroke="#0d4a87" stroke-width="1.45" stroke-linecap="round" stroke-linejoin="round" vector-effect="non-scaling-stroke"><path vector-effect="non-scaling-stroke" d="M11 19h-6a2 2 0 0 1 -2 -2v-10a2 2 0 0 1 2 -2h14a2 2 0 0 1 2 2v5.5"/><path vector-effect="non-scaling-stroke" d="M3 7l9 6l9 -6"/><path vector-effect="non-scaling-stroke" d="M14.5 19h6.5"/><path vector-effect="non-scaling-stroke" d="M18.2 16.3l2.8 2.7l-2.8 2.7"/></g></svg>
<svg class="ic" style="left:1555.90px;top:392.00px;width:13.20px;height:15.70px;" viewBox="0 0 13.20 15.70"><g transform="translate(-2.906 -1.492) scale(0.7312 0.7474)" fill="none" stroke="#0d4a87" stroke-width="1.5" stroke-linecap="round" stroke-linejoin="round" vector-effect="non-scaling-stroke"><path vector-effect="non-scaling-stroke" d="M14 3v4a1 1 0 0 0 1 1h4"/><path vector-effect="non-scaling-stroke" d="M11.5 21h-4.5a2 2 0 0 1 -2 -2v-14a2 2 0 0 1 2 -2h7l5 5v5"/><path vector-effect="non-scaling-stroke" d="M14 19h7"/><path vector-effect="non-scaling-stroke" d="M18 16l3 3l-3 3"/></g></svg>
<svg class="ic" style="left:1597.90px;top:392.10px;width:11.90px;height:7.90px;" viewBox="0 0 11.90 7.90"><g transform="translate(-2.964 -1.383) scale(0.7429 0.7111)" fill="none" stroke="#0d4a87" stroke-width="1.5" stroke-linecap="round" stroke-linejoin="round" vector-effect="non-scaling-stroke"><path vector-effect="non-scaling-stroke" d="M14 3v4a1 1 0 0 0 1 1h4"/><path vector-effect="non-scaling-stroke" d="M5 12v-7a2 2 0 0 1 2 -2h7l5 5v4"/></g></svg>
<div class="t" style="left:1597.2px;top:399.90px;font-size:8.4px;line-height:8.4px;font-weight:700;color:#0d4a87;transform:scaleX(0.84);transform-origin:0 0;-webkit-text-stroke:0.2px #0d4a87">XML</div>
<div class="b" style="left:265px;top:428px;width:1392px;height:51px;background:#ebf3fc;"></div>
<div class="b" style="left:265px;top:479px;width:1392px;height:1px;background:#e0e0e0;"></div>
<div class="b" style="left:281px;top:444px;width:18px;height:18px;background:#1976d2;border-radius:2.5px;"></div>
<svg class="ic" style="left:281px;top:444px;width:18px;height:18px" viewBox="0 0 18 18"><path d="M2.3 8.8L6.9 12.8L15.3 4.5" fill="none" stroke="#fff" stroke-width="1.85"/></svg>
<div class="t" style="top:444.95px;font-size:14px;line-height:14px;font-weight:400;color:#252525;left:324.50px;letter-spacing:0.3px;">INV/000015</div>
<div class="t" style="top:444.95px;font-size:14px;line-height:14px;font-weight:400;color:#252525;left:516.20px;letter-spacing:0.1px;">Russell Winfield</div>
<div class="t" style="top:444.95px;font-size:14px;line-height:14px;font-weight:400;color:#252525;left:709.00px;">25-02-2025</div>
<div class="t" style="top:444.95px;font-size:14px;line-height:14px;font-weight:400;color:#252525;left:900.50px;letter-spacing:-0.05px;">20-03-2025</div>
<div class="t" style="top:444.95px;font-size:14px;line-height:14px;font-weight:400;color:#252525;right:406.00px;text-align:right;">1.533,90 €</div>
<div class="t" style="top:444.95px;font-size:14px;line-height:14px;font-weight:400;color:#252525;right:214.00px;text-align:right;">1.533,90 €</div>
<svg class="ic" style="left:1511.70px;top:445.80px;width:15.10px;height:14.10px;" viewBox="0 0 15.10 14.10"><g transform="translate(-1.550 -1.383) scale(0.7583 0.7028)" fill="none" stroke="#0d4a87" stroke-width="1.45" stroke-linecap="round" stroke-linejoin="round" vector-effect="non-scaling-stroke"><path vector-effect="non-scaling-stroke" d="M3 9l9 -6l9 6v10a2 2 0 0 1 -2 2h-14a2 2 0 0 1 -2 -2z"/><path vector-effect="non-scaling-stroke" d="M3 9l9 6l9 -6"/><path vector-effect="non-scaling-stroke" d="M3 19l6 -6"/><path vector-effect="non-scaling-stroke" d="M15 13l6 6"/></g></svg>
<svg class="ic" style="left:1555.90px;top:444.00px;width:13.20px;height:15.70px;" viewBox="0 0 13.20 15.70"><g transform="translate(-2.906 -1.492) scale(0.7312 0.7474)" fill="none" stroke="#0d4a87" stroke-width="1.5" stroke-linecap="round" stroke-linejoin="round" vector-effect="non-scaling-stroke"><path vector-effect="non-scaling-stroke" d="M14 3v4a1 1 0 0 0 1 1h4"/><path vector-effect="non-scaling-stroke" d="M11.5 21h-4.5a2 2 0 0 1 -2 -2v-14a2 2 0 0 1 2 -2h7l5 5v5"/><path vector-effect="non-scaling-stroke" d="M14 19h7"/><path vector-effect="non-scaling-stroke" d="M18 16l3 3l-3 3"/></g></svg>
<svg class="ic" style="left:1597.90px;top:444.10px;width:11.90px;height:7.90px;" viewBox="0 0 11.90 7.90"><g transform="translate(-2.964 -1.383) scale(0.7429 0.7111)" fill="none" stroke="#0d4a87" stroke-width="1.5" stroke-linecap="round" stroke-linejoin="round" vector-effect="non-scaling-stroke"><path vector-effect="non-scaling-stroke" d="M14 3v4a1 1 0 0 0 1 1h4"/><path vector-effect="non-scaling-stroke" d="M5 12v-7a2 2 0 0 1 2 -2h7l5 5v4"/></g></svg>
<div class="t" style="left:1597.2px;top:451.90px;font-size:8.4px;line-height:8.4px;font-weight:700;color:#0d4a87;transform:scaleX(0.84);transform-origin:0 0;-webkit-text-stroke:0.2px #0d4a87">XML</div>
<div class="b" style="left:265px;top:480px;width:1392px;height:51px;background:#ebf3fc;"></div>
<div class="b" style="left:265px;top:531px;width:1392px;height:1px;background:#e0e0e0;"></div>
<div class="b" style="left:281px;top:496px;width:18px;height:18px;background:#1976d2;border-radius:2.5px;"></div>
<svg class="ic" style="left:281px;top:496px;width:18px;height:18px" viewBox="0 0 18 18"><path d="M2.3 8.8L6.9 12.8L15.3 4.5" fill="none" stroke="#fff" stroke-width="1.85"/></svg>
<div class="t" style="top:496.95px;font-size:14px;line-height:14px;font-weight:400;color:#252525;left:324.50px;letter-spacing:0.3px;">INV/000014</div>
<div class="t" style="top:496.95px;font-size:14px;line-height:14px;font-weight:400;color:#252525;left:516.20px;letter-spacing:0.1px;">Ayumu Hirano</div>
<div class="t" style="top:496.95px;font-size:14px;line-height:14px;font-weight:400;color:#252525;left:709.00px;">25-02-2025</div>
<div class="t" style="top:496.95px;font-size:14px;line-height:14px;font-weight:400;color:#252525;left:900.50px;letter-spacing:-0.05px;">20-03-2025</div>
<div class="t" style="top:496.95px;font-size:14px;line-height:14px;font-weight:400;color:#252525;right:406.00px;text-align:right;">2.175,00 €</div>
<div class="t" style="top:496.95px;font-size:14px;line-height:14px;font-weight:400;color:#252525;right:214.00px;text-align:right;">2.175,00 €</div>
<svg class="ic" style="left:1511.70px;top:497.80px;width:15.10px;height:14.10px;" viewBox="0 0 15.10 14.10"><g transform="translate(-1.550 -1.383) scale(0.7583 0.7028)" fill="none" stroke="#0d4a87" stroke-width="1.45" stroke-linecap="round" stroke-linejoin="round" vector-effect="non-scaling-stroke"><path vector-effect="non-scaling-stroke" d="M3 9l9 -6l9 6v10a2 2 0 0 1 -2 2h-14a2 2 0 0 1 -2 -2z"/><path vector-effect="non-scaling-stroke" d="M3 9l9 6l9 -6"/><path vector-effect="non-scaling-stroke" d="M3 19l6 -6"/><path vector-effect="non-scaling-stroke" d="M15 13l6 6"/></g></svg>
<svg class="ic" style="left:1555.90px;top:496.00px;width:13.20px;height:15.70px;" viewBox="0 0 13.20 15.70"><g transform="translate(-2.906 -1.492) scale(0.7312 0.7474)" fill="none" stroke="#0d4a87" stroke-width="1.5" stroke-linecap="round" stroke-linejoin="round" vector-effect="non-scaling-stroke"><path vector-effect="non-scaling-stroke" d="M14 3v4a1 1 0 0 0 1 1h4"/><path vector-effect="non-scaling-stroke" d="M11.5 21h-4.5a2 2 0 0 1 -2 -2v-14a2 2 0 0 1 2 -2h7l5 5v5"/><path vector-effect="non-scaling-stroke" d="M14 19h7"/><path vector-effect="non-scaling-stroke" d="M18 16l3 3l-3 3"/></g></svg>
<svg class="ic" style="left:1597.90px;top:496.10px;width:11.90px;height:7.90px;" viewBox="0 0 11.90 7.90"><g transform="translate(-2.964 -1.383) scale(0.7429 0.7111)" fill="none" stroke="#0d4a87" stroke-width="1.5" stroke-linecap="round" stroke-linejoin="round" vector-effect="non-scaling-stroke"><path vector-effect="non-scaling-stroke" d="M14 3v4a1 1 0 0 0 1 1h4"/><path vector-effect="non-scaling-stroke" d="M5 12v-7a2 2 0 0 1 2 -2h7l5 5v4"/></g></svg>
<div class="t" style="left:1597.2px;top:503.90px;font-size:8.4px;line-height:8.4px;font-weight:700;color:#0d4a87;transform:scaleX(0.84);transform-origin:0 0;-webkit-text-stroke:0.2px #0d4a87">XML</div>
<div class="b" style="left:265px;top:532px;width:1392px;height:51px;background:#ebf3fc;"></div>
<div class="b" style="left:265px;top:583px;width:1392px;height:1px;background:#e0e0e0;"></div>
<div class="b" style="left:281px;top:548px;width:18px;height:18px;background:#1976d2;border-radius:2.5px;"></div>
<svg class="ic" style="left:281px;top:548px;width:18px;height:18px" viewBox="0 0 18 18"><path d="M2.3 8.8L6.9 12.8L15.3 4.5" fill="none" stroke="#fff" stroke-width="1.85"/></svg>
<div class="t" style="top:548.95px;font-size:14px;line-height:14px;font-weight:400;color:#252525;left:324.50px;letter-spacing:0.3px;">INV/000013</div>
<div class="t" style="top:548.95px;font-size:14px;line-height:14px;font-weight:400;color:#252525;left:516.20px;letter-spacing:0.1px;">Russell Winfield</div>
<div class="t" style="top:548.95px;font-size:14px;line-height:14px;font-weight:400;color:#252525;left:709.00px;">25-02-2025</div>
<div class="t" style="top:548.95px;font-size:14px;line-height:14px;font-weight:400;color:#252525;left:900.50px;letter-spacing:-0.05px;">20-03-2025</div>
<div class="t" style="top:548.95px;font-size:14px;line-height:14px;font-weight:400;color:#252525;right:406.00px;text-align:right;">700,00 €</div>
<div class="t" style="top:548.95px;font-size:14px;line-height:14px;font-weight:400;color:#252525;right:214.00px;text-align:right;">700,00 €</div>
<svg class="ic" style="left:1511.70px;top:550.10px;width:15.10px;height:13.60px;" viewBox="0 0 15.10 13.60"><g transform="translate(-1.550 -2.913) scale(0.7583 0.7275)" fill="none" stroke="#0d4a87" stroke-width="1.45" stroke-linecap="round" stroke-linejoin="round" vector-effect="non-scaling-stroke"><path vector-effect="non-scaling-stroke" d="M11 19h-6a2 2 0 0 1 -2 -2v-10a2 2 0 0 1 2 -2h14a2 2 0 0 1 2 2v5.5"/><path vector-effect="non-scaling-stroke" d="M3 7l9 6l9 -6"/><path vector-effect="non-scaling-stroke" d="M14.5 19h6.5"/><path vector-effect="non-scaling-stroke" d="M18.2 16.3l2.8 2.7l-2.8 2.7"/></g></svg>
<svg class="ic" style="left:1555.90px;top:548.00px;width:13.20px;height:15.70px;" viewBox="0 0 13.20 15.70"><g transform="translate(-2.906 -1.492) scale(0.7312 0.7474)" fill="none" stroke="#0d4a87" stroke-width="1.5" stroke-linecap="round" stroke-linejoin="round" vector-effect="non-scaling-stroke"><path vector-effect="non-scaling-stroke" d="M14 3v4a1 1 0 0 0 1 1h4"/><path vector-effect="non-scaling-stroke" d="M11.5 21h-4.5a2 2 0 0 1 -2 -2v-14a2 2 0 0 1 2 -2h7l5 5v5"/><path vector-effect="non-scaling-stroke" d="M14 19h7"/><path vector-effect="non-scaling-stroke" d="M18 16l3 3l-3 3"/></g></svg>
<svg class="ic" style="left:1597.90px;top:548.10px;width:11.90px;height:7.90px;" viewBox="0 0 11.90 7.90"><g transform="translate(-2.964 -1.383) scale(0.7429 0.7111)" fill="none" stroke="#0d4a87" stroke-width="1.5" stroke-linecap="round" stroke-linejoin="round" vector-effect="non-scaling-stroke"><path vector-effect="non-scaling-stroke" d="M14 3v4a1 1 0 0 0 1 1h4"/><path vector-effect="non-scaling-stroke" d="M5 12v-7a2 2 0 0 1 2 -2h7l5 5v4"/></g></svg>
<div class="t" style="left:1597.2px;top:555.90px;font-size:8.4px;line-height:8.4px;font-weight:700;color:#0d4a87;transform:scaleX(0.84);transform-origin:0 0;-webkit-text-stroke:0.2px #0d4a87">XML</div>
<div class="b" style="left:265px;top:584px;width:1392px;height:51px;background:#ebf3fc;"></div>
<div class="b" style="left:265px;top:635px;width:1392px;height:1px;background:#e0e0e0;"></div>
<div class="b" style="left:281px;top:600px;width:18px;height:18px;background:#1976d2;border-radius:2.5px;"></div>
<svg class="ic" style="left:281px;top:600px;width:18px;height:18px" viewBox="0 0 18 18"><path d="M2.3 8.8L6.9 12.8L15.3 4.5" fill="none" stroke="#fff" stroke-width="1.85"/></svg>
<div class="t" style="top:600.95px;font-size:14px;line-height:14px;font-weight:400;color:#252525;left:324.50px;letter-spacing:0.3px;">INV/000012</div>
<div class="t" style="top:600.95px;font-size:14px;line-height:14px;font-weight:400;color:#252525;left:516.20px;letter-spacing:0.1px;">Ayumu Hirano</div>
<div class="t" style="top:600.95px;font-size:14px;line-height:14px;font-weight:400;color:#252525;left:709.00px;">25-02-2025</div>
<div class="t" style="top:600.95px;font-size:14px;line-height:14px;font-weight:400;color:#252525;left:900.50px;letter-spacing:-0.05px;">20-03-2025</div>
<div class="t" style="top:600.95px;font-size:14px;line-height:14px;font-weight:400;color:#252525;right:406.00px;text-align:right;">1.754,95 €</div>
<div class="t" style="top:600.95px;font-size:14px;line-height:14px;font-weight:400;color:#252525;right:214.00px;text-align:right;">1.754,95 €</div>
<svg class="ic" style="left:1511.70px;top:601.80px;width:15.10px;height:14.10px;" viewBox="0 0 15.10 14.10"><g transform="translate(-1.550 -1.383) scale(0.7583 0.7028)" fill="none" stroke="#0d4a87" stroke-width="1.45" stroke-linecap="round" stroke-linejoin="round" vector-effect="non-scaling-stroke"><path vector-effect="non-scaling-stroke" d="M3 9l9 -6l9 6v10a2 2 0 0 1 -2 2h-14a2 2 0 0 1 -2 -2z"/><path vector-effect="non-scaling-stroke" d="M3 9l9 6l9 -6"/><path vector-effect="non-scaling-stroke" d="M3 19l6 -6"/><path vector-effect="non-scaling-stroke" d="M15 13l6 6"/></g></svg>
<svg class="ic" style="left:1555.90px;top:600.00px;width:13.20px;height:15.70px;" viewBox="0 0 13.20 15.70"><g transform="translate(-2.906 -1.492) scale(0.7312 0.7474)" fill="none" stroke="#0d4a87" stroke-width="1.5" stroke-linecap="round" stroke-linejoin="round" vector-effect="non-scaling-stroke"><path vector-effect="non-scaling-stroke" d="M14 3v4a1 1 0 0 0 1 1h4"/><path vector-effect="non-scaling-stroke" d="M11.5 21h-4.5a2 2 0 0 1 -2 -2v-14a2 2 0 0 1 2 -2h7l5 5v5"/><path vector-effect="non-scaling-stroke" d="M14 19h7"/><path vector-effect="non-scaling-stroke" d="M18 16l3 3l-3 3"/></g></svg>
<svg class="ic" style="left:1597.90px;top:600.10px;width:11.90px;height:7.90px;" viewBox="0 0 11.90 7.90"><g transform="translate(-2.964 -1.383) scale(0.7429 0.7111)" fill="none" stroke="#0d4a87" stroke-width="1.5" stroke-linecap="round" stroke-linejoin="round" vector-effect="non-scaling-stroke"><path vector-effect="non-scaling-stroke" d="M14 3v4a1 1 0 0 0 1 1h4"/><path vector-effect="non-scaling-stroke" d="M5 12v-7a2 2 0 0 1 2 -2h7l5 5v4"/></g></svg>
<div class="t" style="left:1597.2px;top:607.90px;font-size:8.4px;line-height:8.4px;font-weight:700;color:#0d4a87;transform:scaleX(0.84);transform-origin:0 0;-webkit-text-stroke:0.2px #0d4a87">XML</div>
<div class="b" style="left:265px;top:636px;width:1392px;height:52px;background:#ebf3fc;"></div>
<div class="b" style="left:265px;top:688px;width:1392px;height:1px;background:#e0e0e0;"></div>
<div class="b" style="left:281px;top:652px;width:18px;height:18px;background:#1976d2;border-radius:2.5px;"></div>
<svg class="ic" style="left:281px;top:652px;width:18px;height:18px" viewBox="0 0 18 18"><path d="M2.3 8.8L6.9 12.8L15.3 4.5" fill="none" stroke="#fff" stroke-width="1.85"/></svg>
<div class="t" style="top:652.95px;font-size:14px;line-height:14px;font-weight:400;color:#252525;left:324.50px;letter-spacing:0.3px;">INV/000011</div>
<div class="t" style="top:652.95px;font-size:14px;line-height:14px;font-weight:400;color:#252525;left:516.20px;letter-spacing:0.1px;">Russell Winfield</div>
<div class="t" style="top:652.95px;font-size:14px;line-height:14px;font-weight:400;color:#252525;left:709.00px;">25-02-2025</div>
<div class="t" style="top:652.95px;font-size:14px;line-height:14px;font-weight:400;color:#252525;left:900.50px;letter-spacing:-0.05px;">20-03-2025</div>
<div class="t" style="top:652.95px;font-size:14px;line-height:14px;font-weight:400;color:#252525;right:406.00px;text-align:right;">1.447,90 €</div>
<div class="t" style="top:652.95px;font-size:14px;line-height:14px;font-weight:400;color:#252525;right:214.00px;text-align:right;">1.447,90 €</div>
<svg class="ic" style="left:1511.70px;top:653.80px;width:15.10px;height:14.10px;" viewBox="0 0 15.10 14.10"><g transform="translate(-1.550 -1.383) scale(0.7583 0.7028)" fill="none" stroke="#0d4a87" stroke-width="1.45" stroke-linecap="round" stroke-linejoin="round" vector-effect="non-scaling-stroke"><path vector-effect="non-scaling-stroke" d="M3 9l9 -6l9 6v10a2 2 0 0 1 -2 2h-14a2 2 0 0 1 -2 -2z"/><path vector-effect="non-scaling-stroke" d="M3 9l9 6l9 -6"/><path vector-effect="non-scaling-stroke" d="M3 19l6 -6"/><path vector-effect="non-scaling-stroke" d="M15 13l6 6"/></g></svg>
<svg class="ic" style="left:1555.90px;top:652.00px;width:13.20px;height:15.70px;" viewBox="0 0 13.20 15.70"><g transform="translate(-2.906 -1.492) scale(0.7312 0.7474)" fill="none" stroke="#0d4a87" stroke-width="1.5" stroke-linecap="round" stroke-linejoin="round" vector-effect="non-scaling-stroke"><path vector-effect="non-scaling-stroke" d="M14 3v4a1 1 0 0 0 1 1h4"/><path vector-effect="non-scaling-stroke" d="M11.5 21h-4.5a2 2 0 0 1 -2 -2v-14a2 2 0 0 1 2 -2h7l5 5v5"/><path vector-effect="non-scaling-stroke" d="M14 19h7"/><path vector-effect="non-scaling-stroke" d="M18 16l3 3l-3 3"/></g></svg>
<svg class="ic" style="left:1597.90px;top:652.10px;width:11.90px;height:7.90px;" viewBox="0 0 11.90 7.90"><g transform="translate(-2.964 -1.383) scale(0.7429 0.7111)" fill="none" stroke="#0d4a87" stroke-width="1.5" stroke-linecap="round" stroke-linejoin="round" vector-effect="non-scaling-stroke"><path vector-effect="non-scaling-stroke" d="M14 3v4a1 1 0 0 0 1 1h4"/><path vector-effect="non-scaling-stroke" d="M5 12v-7a2 2 0 0 1 2 -2h7l5 5v4"/></g></svg>
<div class="t" style="left:1597.2px;top:659.90px;font-size:8.4px;line-height:8.4px;font-weight:700;color:#0d4a87;transform:scaleX(0.84);transform-origin:0 0;-webkit-text-stroke:0.2px #0d4a87">XML</div>
<div class="t" style="top:705.85px;font-size:14px;line-height:14px;font-weight:400;color:#222;left:281.00px;letter-spacing:0.15px;">7 rows selected</div>
<div class="t" style="top:706.05px;font-size:14px;line-height:14px;font-weight:400;color:#222;left:1236.00px;letter-spacing:-0.05px;">Rows per page:</div>
<div class="t" style="top:706.05px;font-size:14px;line-height:14px;font-weight:400;color:#222;left:1350.00px;">10</div>
<div class="b" style="left:1372.4px;top:713px;width:0;height:0;border-left:5px solid transparent;border-right:5px solid transparent;border-top:5px solid #555;"></div>
<div class="t" style="top:706.05px;font-size:14px;line-height:14px;font-weight:400;color:#222;left:1422.00px;letter-spacing:0.35px;">1–7 of 7</div>
<svg class="ic" style="left:1508.70px;top:709.50px;width:13.20px;height:11.30px;" viewBox="0 0 13.20 11.30"><g transform="translate(-6.382 -5.650) scale(1.0637 0.9417)" fill="#bdbdbd" stroke="none" stroke-width="0" stroke-linecap="round" stroke-linejoin="round" vector-effect="non-scaling-stroke"><path d="M18.41 16.59L13.82 12l4.59-4.59L17 6l-6 6 6 6zM6 6h2v12H6z"/></g></svg>
<svg class="ic" style="left:1550.90px;top:709.50px;width:7.90px;height:11.30px;" viewBox="0 0 7.90 11.30"><g transform="translate(-8.529 -5.650) scale(1.0661 0.9417)" fill="#bdbdbd" stroke="none" stroke-width="0" stroke-linecap="round" stroke-linejoin="round" vector-effect="non-scaling-stroke"><path d="M15.41 7.41L14 6l-6 6 6 6 1.41-1.41L10.83 12z"/></g></svg>
<svg class="ic" style="left:1591.20px;top:709.50px;width:8.40px;height:11.30px;" viewBox="0 0 8.40 11.30"><g transform="translate(-9.738 -5.650) scale(1.1336 0.9417)" fill="#bdbdbd" stroke="none" stroke-width="0" stroke-linecap="round" stroke-linejoin="round" vector-effect="non-scaling-stroke"><path d="M10 6L8.59 7.41 13.17 12l-4.58 4.59L10 18l6-6z"/></g></svg>
<svg class="ic" style="left:1628.60px;top:709.50px;width:13.20px;height:11.30px;" viewBox="0 0 13.20 11.30"><g transform="translate(-5.946 -5.650) scale(1.0637 0.9417)" fill="#bdbdbd" stroke="none" stroke-width="0" stroke-linecap="round" stroke-linejoin="round" vector-effect="non-scaling-stroke"><path d="M5.59 7.41L10.18 12l-4.59 4.59L7 18l6-6-6-6zM16 6h2v12h-2z"/></g></svg>
</body></html>
